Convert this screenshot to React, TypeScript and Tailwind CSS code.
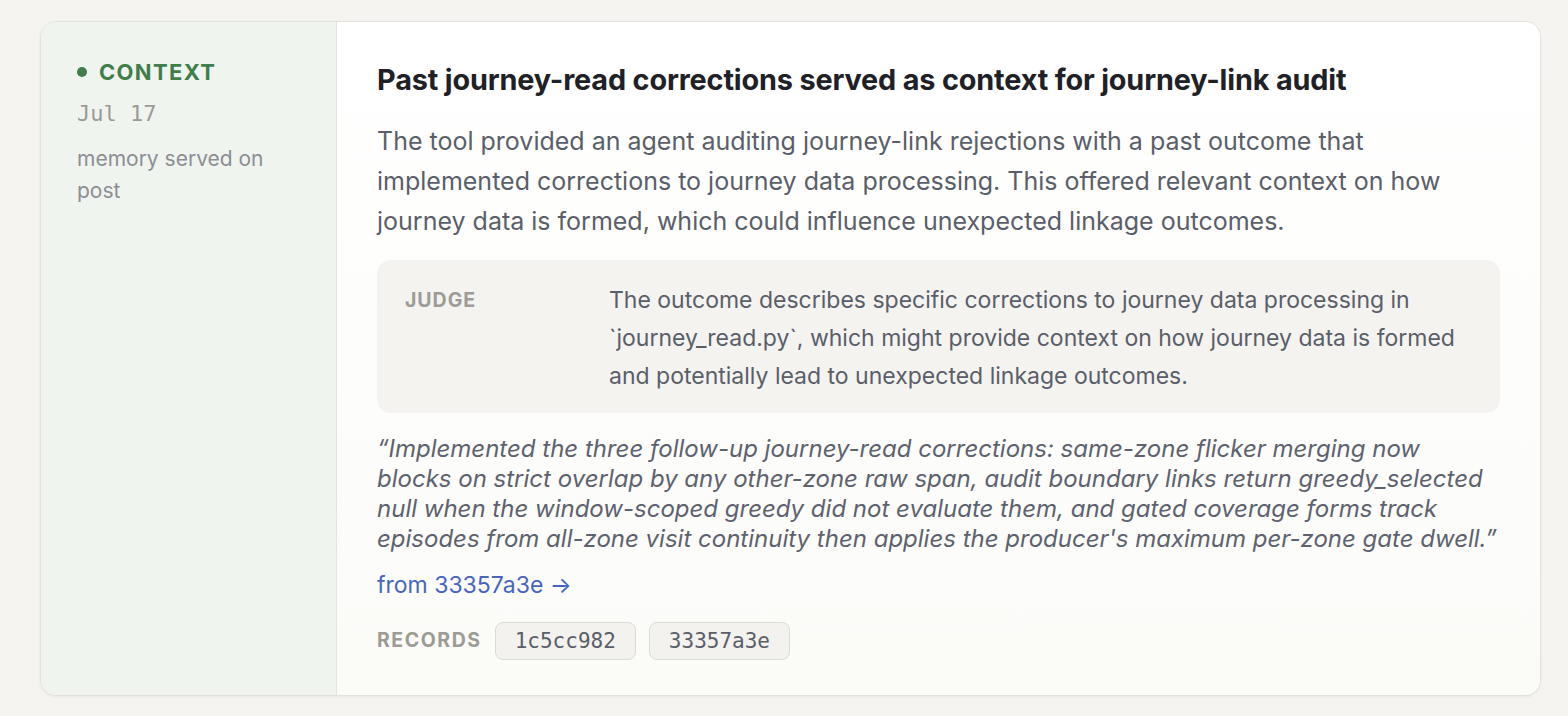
import React from "react";

const sans = { fontFamily: "Inter, 'Noto Sans', sans-serif" };
const mono = { fontFamily: "'DejaVu Sans Mono', 'Liberation Mono', monospace" };

export default function App() {
  return (
    <div className="min-h-[716px] w-full bg-[#f5f4f0] pt-[21px] pl-[40px] pr-[27px] pb-[20px]" style={sans}>
      <div className="flex h-[675px] overflow-hidden rounded-[16px] border border-[#e3e2dc] bg-white shadow-[0_1px_3px_rgba(0,0,0,0.06)]">
        <div className="w-[296px] shrink-0 border-r border-[#dfe7de] bg-[#eff4ee] pl-[36px] pt-[35px]">
          <div className="flex items-center gap-[12px]">
            <span className="h-[10px] w-[10px] rounded-full bg-[#3f7e4b]" />
            <span className="text-[22px] font-bold leading-[30px] tracking-[0.06em] text-[#3f7e4b]">CONTEXT</span>
          </div>
          <div className="mt-[12px] text-[22px] leading-[30px] text-[#9b9b96]" style={mono}>Jul 17</div>
          <div className="mt-[14px] w-[210px] text-[21px] leading-[32px] text-[#8c8e94]">memory served on post</div>
        </div>
        <div className="flex-1 bg-gradient-to-b from-white to-[#fbfbf8] pl-[40px] pr-[40px] pt-[40px]">
          <h1 className="text-[28.8px] font-bold leading-[36px] tracking-[-0.005em] text-[#202127]">
            Past journey-read corrections served as context for journey-link audit
          </h1>
          <p className="mt-[23px] text-[25px] leading-[40px] text-[#5a5e69]">
            The tool provided an agent auditing journey-link rejections with a past outcome that implemented corrections to journey data processing. This offered relevant context on how journey data is formed, which could influence unexpected linkage outcomes.
          </p>
          <div className="mt-[19px] grid grid-cols-[204px_1fr] rounded-[14px] bg-[#f4f3f0] pl-[28px] pr-[28px] pt-[21px] pb-[18px]">
            <div className="text-[19.5px] font-bold leading-[38px] tracking-[0.05em] text-[#9c9b94]">JUDGE</div>
            <div className="text-[23px] leading-[38px] text-[#5a5e69]">
              The outcome describes specific corrections to journey data processing in `journey_read.py`, which might provide context on how journey data is formed and potentially lead to unexpected linkage outcomes.
            </div>
          </div>
          <p className="mt-[21px] whitespace-nowrap text-[24px] italic leading-[30px] text-[#5d626e]">
            “Implemented the three follow-up journey-read corrections: same-zone flicker merging now
            <br />
            blocks on strict overlap by any other-zone raw span, audit boundary links return greedy_selected
            <br />
            null when the window-scoped greedy did not evaluate them, and gated coverage forms track
            <br />
            episodes from all-zone visit continuity then applies the producer's maximum per-zone gate dwell.”
          </p>
          <div className="mt-[16px] text-[23px] leading-[30px] text-[#4765bf]">from 33357a3e →</div>
          <div className="mt-[22px] flex items-center gap-[13px]">
            <span className="text-[19.5px] font-bold tracking-[0.08em] text-[#9c9b94]">RECORDS</span>
            <span className="rounded-[8px] border border-[#dcdbd5] bg-[#f3f2ee] px-[19px] py-[3px] text-[21px] leading-[30px] text-[#5a5e69]" style={mono}>1c5cc982</span>
            <span className="rounded-[8px] border border-[#dcdbd5] bg-[#f3f2ee] px-[19px] py-[3px] text-[21px] leading-[30px] text-[#5a5e69]" style={mono}>33357a3e</span>
          </div>
        </div>
      </div>
    </div>
  );
}
